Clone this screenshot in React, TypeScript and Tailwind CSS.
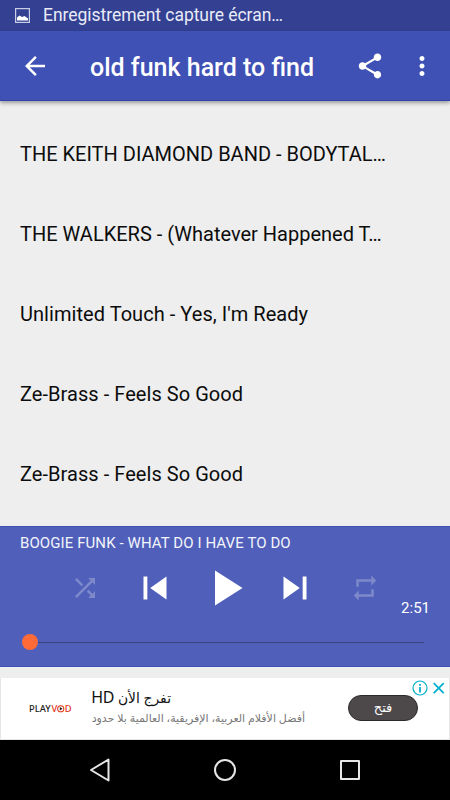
import type { ReactNode } from 'react';

const songs = [
  'THE KEITH DIAMOND BAND - BODYTAL…',
  'THE WALKERS - (Whatever Happened T…',
  "Unlimited Touch - Yes, I'm Ready",
  'Ze-Brass - Feels So Good',
  'Ze-Brass - Feels So Good',
];

function Icon({ path, className }: { path: string; className: string }) {
  return (
    <svg viewBox="0 0 24 24" fill="currentColor" className={className}>
      <path d={path} />
    </svg>
  );
}

function StatusBar() {
  return (
    <div className="h-[31px] bg-[#344193] flex items-center text-[#e9ebf6]">
      <svg viewBox="0 0 15 15" className="ml-[15px] w-[15px] h-[15px] shrink-0">
        <rect x="0.6" y="0.6" width="13.8" height="13.8" fill="none" stroke="#c9cde6" strokeWidth="1.2" />
        <path d="M2 12.6V9.5L4.5 7.5L7 9L9.5 8L13 10.5V12.6Z" fill="#ffffff" />
      </svg>
      <span className="ml-[13px] -mt-px whitespace-nowrap text-[17.5px] leading-[30px] tracking-[-0.04px]">
        Enregistrement capture écran…
      </span>
    </div>
  );
}

function AppBar() {
  return (
    <header className="h-[70px] bg-[#3f51b5] border-b border-[#2f43ad] shadow-[0_2px_4px_rgba(0,0,0,0.35)] flex items-center text-white">
      <Icon
        path="M20 11H7.83l5.59-5.59L12 4l-8 8 8 8 1.41-1.41L7.83 13H20v-2z"
        className="ml-[20px] size-[30px]"
      />
      <h1 className="ml-[40px] mt-[4px] flex-1 text-[25px] leading-[30px] font-medium whitespace-nowrap">
        old funk hard to find
      </h1>
      <Icon
        path="M18 16.08c-.76 0-1.44.3-1.96.77L8.91 12.7c.05-.23.09-.46.09-.7s-.04-.47-.09-.7l7.05-4.11c.54.5 1.25.81 2.04.81 1.66 0 3-1.34 3-3s-1.34-3-3-3-3 1.34-3 3c0 .24.04.47.09.7L8.04 9.81C7.5 9.31 6.79 9 6 9c-1.66 0-3 1.34-3 3s1.34 3 3 3c.79 0 1.5-.31 2.04-.81l7.12 4.16c-.05.21-.08.43-.08.65 0 1.61 1.31 2.92 2.92 2.92 1.61 0 2.92-1.31 2.92-2.92s-1.31-2.92-2.92-2.92z"
        className="size-[30px]"
      />
      <Icon
        path="M12 8c1.1 0 2-.9 2-2s-.9-2-2-2-2 .9-2 2 .9 2 2 2zm0 2c-1.1 0-2 .9-2 2s.9 2 2 2 2-.9 2-2-.9-2-2-2zm0 6c-1.1 0-2 .9-2 2s.9 2 2 2 2-.9 2-2-.9-2-2-2z"
        className="ml-[22px] mr-[13px] size-[30px]"
      />
    </header>
  );
}

function Control({ children }: { children: ReactNode }) {
  return <button className="flex items-center justify-center h-[60px] w-[70px]">{children}</button>;
}

function Player() {
  return (
    <section className="h-[141px] bg-[#5060ba] border-y border-[#3f51b5] text-white">
      <p className="pl-[20px] pt-[6px] text-[15px] leading-[20px] tracking-[0.09px] text-[#f3f4fb]">
        BOOGIE FUNK - WHAT DO I HAVE TO DO
      </p>
      <div className="relative mt-[4.5px] flex justify-center">
        <Control>
          <Icon
            path="M10.59 9.17L5.41 4 4 5.41l5.17 5.17 1.42-1.41zM14.5 4l2.04 2.04L4 18.59 5.41 20 17.96 7.46 20 9.5V4h-5.5zm.33 9.41l-1.41 1.41 3.13 3.13L14.5 20H20v-5.5l-2.04 2.04-3.13-3.13z"
            className="size-[30px] text-[#7e89cb]"
          />
        </Control>
        <Control>
          <Icon path="M6 6h2v12H6zm3.5 6l8.5 6V6z" className="size-[46px]" />
        </Control>
        <Control>
          <Icon path="M8 5v14l11-7z" className="size-[60px]" />
        </Control>
        <Control>
          <Icon path="M6 18l8.5-6L6 6v12zM16 6v12h2V6h-2z" className="size-[46px]" />
        </Control>
        <Control>
          <Icon
            path="M7 7h10v3l4-4-4-4v3H5v6h2V7zm10 10H7v-3l-4 4 4 4v-3h12v-6h-2v4z"
            className="size-[30px] text-[#7e89cb]"
          />
        </Control>
        <span className="absolute right-[20px] top-[40.5px] text-[15px] leading-[20px]">2:51</span>
      </div>
      <div className="mt-[16.5px] ml-[22px] mr-[26px] flex items-center">
        <span className="size-[16px] rounded-full bg-[#ff6a36]" />
        <span className="flex-1 h-px bg-[#38427d]" />
      </div>
    </section>
  );
}

function AdBanner() {
  return (
    <aside className="relative mt-[11px] h-[62px] bg-white border-x border-b border-[#e6e6e6] flex">
      <div className="ml-[28px] mt-[25px] w-[62px] shrink-0 flex items-center h-[12px] text-[9.3px] leading-[12px] whitespace-nowrap font-['Noto_Sans'] font-medium text-[#222222]">
        <span>PLAY</span>
        <span className="ml-px text-[#e0300f] flex items-center">
          V
          <svg viewBox="0 0 8 8" className="size-[7.5px]">
            <circle cx="4" cy="4" r="3.3" fill="none" stroke="#e0300f" strokeWidth="1.1" />
            <path d="M3 2.2L6 4L3 5.8Z" fill="#222222" />
          </svg>
          D
        </span>
      </div>
      <div className="w-[215px] shrink-0 whitespace-nowrap font-['Noto_Sans','DejaVu_Sans',sans-serif]">
        <p dir="rtl" className="mt-[8px] w-[80px] text-[13.9px] leading-[22px] text-[#111111]">
          تفرج الأن <span className="text-[16px] tracking-[-0.2px]">HD</span>
        </p>
        <p dir="rtl" className="mt-px w-[214px] text-[11px] leading-[16px] text-[#777777]">
          أفضل الأفلام العربية، الإفريقية، العالمية بلا حدود
        </p>
      </div>
      <button className="ml-[42px] mt-[17px] w-[70px] h-[26px] rounded-full bg-[#4d494a] border border-[#2d292a] text-white text-[13px] leading-[20px] font-['DejaVu_Sans']">
        فتح
      </button>
      <svg viewBox="0 0 36 16" className="absolute right-[1px] top-[2px] w-[36px] h-[16px]" fill="none" stroke="#00aecd">
        <circle cx="8" cy="8" r="7" strokeWidth="1.2" />
        <path d="M8 4v1.8M8 7v5.5" strokeWidth="1.8" />
        <path d="M21.7 3.2l10 10M31.7 3.2l-10 10" strokeWidth="1.7" />
      </svg>
    </aside>
  );
}

function NavBar() {
  return (
    <nav className="h-[60px] bg-black flex items-center">
      <svg viewBox="0 0 24 26" className="ml-[88px] w-[24px] h-[26px]" fill="none" stroke="#e6e6e6" strokeWidth="2" strokeLinejoin="round">
        <path d="M3 13L20.5 2.5V23.5Z" />
      </svg>
      <svg viewBox="0 0 24 24" className="ml-[101px] size-[24px]" fill="none" stroke="#e6e6e6" strokeWidth="2">
        <circle cx="12" cy="12" r="10" />
      </svg>
      <span className="ml-[103px] size-[20px] rounded-[1px] border-2 border-[#e6e6e6]" />
    </nav>
  );
}

export default function App() {
  return (
    <div className="w-[450px] h-[800px] overflow-hidden flex flex-col bg-[#eeeeee] font-['Roboto',sans-serif]">
      <StatusBar />
      <AppBar />
      <ul className="h-[425px] pt-[13px] overflow-hidden">
        {songs.map((song, i) => (
          <li key={i} className="h-[80px] pl-[20px] flex items-center">
            <span
              className={`whitespace-nowrap text-[20px] leading-[24px] text-[#0c0c0c] ${
                song.endsWith('…') ? 'tracking-normal' : 'tracking-[0.05px]'
              }`}
            >
              {song}
            </span>
          </li>
        ))}
      </ul>
      <Player />
      <AdBanner />
      <NavBar />
    </div>
  );
}
